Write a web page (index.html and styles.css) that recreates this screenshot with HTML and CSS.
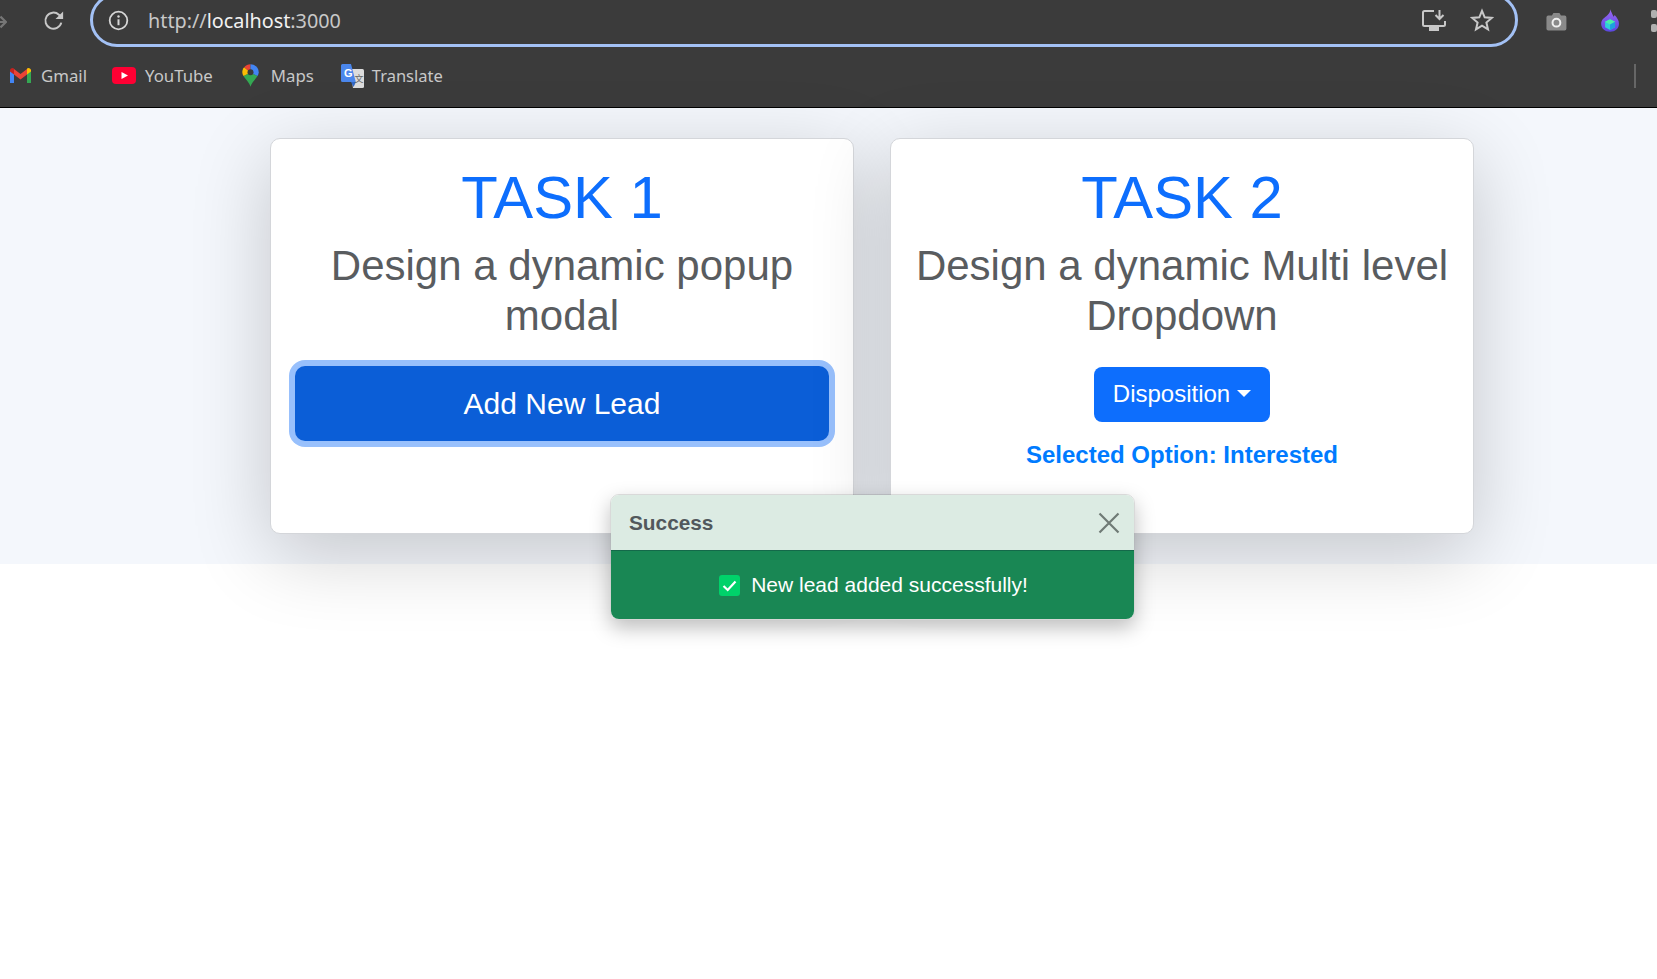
FILE: index.html

```html
<!DOCTYPE html>
<html lang="en">
<head>
  <meta charset="UTF-8" />
  <title>Tasks</title>
  <link rel="stylesheet" href="styles.css">
</head>
<body>
  <div class="browser">
    <div class="toolbar">
      <svg class="forward" width="8" height="18" viewBox="0 0 8 18"><path d="M-3 9H6M.5 3L6.500 9 .5 15" fill="none" stroke="#767676" stroke-width="2.400"/></svg>
      <svg class="reload" width="24" height="24" viewBox="0 0 20 20"><path d="M16.800 11.500A7.400 7.400 0 1 1 14.600 4.200L17 6.400" fill="none" stroke="#c8c8c8" stroke-width="1.800"/><path d="M18.500 1.200V8.200H11.500Z" fill="#c8c8c8"/></svg>
      <div class="omnibox">
        <svg class="info" width="21" height="21" viewBox="0 0 21 21"><circle cx="10.500" cy="10.500" r="8.800" fill="none" stroke="#d6d6d6" stroke-width="1.800"/><path d="M10.500 9.300V15.200" stroke="#d6d6d6" stroke-width="2"/><circle cx="10.500" cy="6.500" r="1.200" fill="#d6d6d6"/></svg>
        <span class="url">http://<b>localhost</b>:3000</span>
        <svg class="install" width="26" height="23" viewBox="0 0 26 23"><path d="M13 2H3.500A1.500 1.500 0 0 0 2 3.500V15.500A1.500 1.500 0 0 0 3.500 17H22.500A1.500 1.500 0 0 0 24 15.500V12" fill="none" stroke="#c8c8c8" stroke-width="2"/><path d="M18.500 1V9.500M14.500 6L18.500 10 22.500 6" fill="none" stroke="#c8c8c8" stroke-width="2"/><path d="M8 18H18V22H8Z" fill="#c8c8c8"/></svg>
        <svg class="star" width="24" height="24" viewBox="0 0 24 24"><path d="M12 2.800L14.700 9.300 21.700 9.900 16.400 14.500 18 21.400 12 17.700 6 21.400 7.600 14.500 2.300 9.900 9.300 9.300Z" fill="none" stroke="#c8c8c8" stroke-width="2"/></svg>
      </div>
      <svg class="camera" width="23" height="21" viewBox="0 0 23 21"><path d="M2.500 4H6.500L8.200 1H14.800L16.500 4H20.500A2 2 0 0 1 22.500 6V18.500A2 2 0 0 1 20.500 20.500H2.500A2 2 0 0 1 .5 18.500V6A2 2 0 0 1 2.500 4Z" fill="#8a8a8a"/><circle cx="11.500" cy="11.800" r="4.300" fill="none" stroke="#f0f0f0" stroke-width="2.200"/></svg>
      <svg class="flame" width="20" height="25" viewBox="0 0 20 25">
        <defs><linearGradient id="flameFill" x1="0" y1="0" x2="0" y2="1"><stop offset="0" stop-color="#9a68f2"/><stop offset="1" stop-color="#5a48e0"/></linearGradient></defs>
        <path d="M10.500 0C10.800 3 13 5.500 13.800 8.500C14.300 7.800 14.800 7.200 15 6.500C17.800 9.500 19.800 12.500 19.800 16C19.800 21.500 15.500 24.800 10 24.800C4.500 24.800 .2 21.500 .2 16C.2 11.500 4 9.500 7 6.800C8.800 5 10.200 2.800 10.500 0Z" fill="url(#flameFill)"/>
        <path d="M10 11L15.500 14V20L10 23 4.500 20V14Z" fill="#2fd0d8"/><path d="M10 11L15.500 14 10 17 4.500 14Z" fill="#4af0a8"/><path d="M10 17L15.500 14V20L10 23Z" fill="#1f9fe0"/>
      </svg>
      <div class="menu-dots"><i></i><i></i></div>
    </div>

    <div class="bookmarks">
      <a class="bookmark">
        <svg width="23" height="17" viewBox="0 0 23 17"><path d="M1 16H5V7L1 3.500Z" fill="#4285f4"/><path d="M18 16H22V3.500L18 7Z" fill="#34a853"/><path d="M5 7.500L11.500 12.500 18 7.500V2L11.500 7 5 2Z" fill="#ea4335"/><path d="M1 4.500V3A2.500 2.500 0 0 1 5 1.500V7.500Z" fill="#c5221f"/><path d="M22 4.500V3A2.500 2.500 0 0 0 18 1.500V7.500Z" fill="#fbbc04"/></svg>
        Gmail
      </a>
      <a class="bookmark">
        <svg width="24" height="17" viewBox="0 0 24 17"><rect width="24" height="17" rx="4" fill="#ff0033"/><path d="M9.500 5L16 8.500 9.500 12Z" fill="#fff"/></svg>
        YouTube
      </a>
      <a class="bookmark bookmark-maps">
        <svg width="17" height="23" viewBox="0 0 17 23"><path d="M8.500 22.800C7.500 18.500 3.500 15.500 1.500 12L8.500 8.500 15.500 12C13.500 15.500 9.500 18.500 8.500 22.800Z" fill="#34a853"/><path d="M1.500 12C.7 10.700.3 9.500.3 8.200C.3 6.300 1 4.600 2.200 3.300L8.500 8.500Z" fill="#fbbc04"/><path d="M2.200 3.300C3.700 1.500 6 .3 8.500 .3L8.500 8.500Z" fill="#ea4335"/><path d="M8.500 .3C13 .3 16.700 3.800 16.700 8.200C16.700 9.500 16.300 10.700 15.500 12L8.500 8.500Z" fill="#4285f4"/><circle cx="8.500" cy="8.300" r="3" fill="#3b3b3b"/></svg>
        Maps
      </a>
      <a class="bookmark bookmark-translate">
        <svg width="23" height="24" viewBox="0 0 23 24"><path d="M9 5H21.500A1.500 1.500 0 0 1 23 6.500V22.500A1.500 1.500 0 0 1 21.500 24H12Z" fill="#dcdcdc"/><path d="M1.500 0H10L14.800 18H1.500A1.500 1.500 0 0 1 0 16.500V1.500A1.500 1.500 0 0 1 1.500 0Z" fill="#4b87ec"/><path d="M10 18L12.500 23 15 18Z" fill="#3268c8"/><text x="3" y="12.500" class="g-letter">G</text><text x="13.500" y="18" class="zh-letter">文</text></svg>
        Translate
      </a>
      <span class="bookmarks-sep"></span>
    </div>
  </div>

  <div class="page">
    <div class="task-row">
      <section class="task-card">
        <h1>TASK 1</h1>
        <h2>Design a dynamic popup modal</h2>
        <button class="btn-lead">Add New Lead</button>
      </section>
      <section class="task-card">
        <h1>TASK 2</h1>
        <h2>Design a dynamic Multi level Dropdown</h2>
        <button class="btn-drop">Disposition<span class="caret"></span></button>
        <p class="selected">Selected Option: Interested</p>
      </section>
    </div>
  </div>

  <div class="toast">
    <div class="toast-head">
      <strong>Success</strong>
      <svg width="22" height="22" viewBox="0 0 22 22"><path d="M1.500 1.500L20.500 20.500M20.500 1.500L1.500 20.500" stroke="#6f7a75" stroke-width="2.200"/></svg>
    </div>
    <div class="toast-body">
      <svg width="21" height="21" viewBox="0 0 21 21"><rect width="21" height="21" rx="3" fill="#00d26a"/><path d="M4.500 11L8.700 15 16.500 6.500" fill="none" stroke="#fff" stroke-width="2.200"/></svg>
      New lead added successfully!
    </div>
  </div>
</body>
</html>
```

FILE: styles.css

```css
body {
  margin: 0;
  min-height: 100vh;
  font-family: "Liberation Sans", Arial, sans-serif;
  background: #fff;
}
.browser {
  background: #3b3b3b;
  height: 107px;
  border-bottom: 1px solid #000;
  overflow: hidden;
  font-family: "Noto Sans", sans-serif;
}
.toolbar {
  display: flex;
  align-items: center;
  height: 47px;
}
.forward { margin-top: -3px; }
.reload { margin: -6px 0 0 36px; }
.omnibox {
  flex: none;
  display: flex;
  align-items: center;
  box-sizing: border-box;
  width: 1428px;
  height: 54px;
  margin: -7px 0 0 25px;
  padding: 0 21px 0 15px;
  border: 3px solid #a3c1f5;
  border-radius: 28px;
}
.url {
  margin-left: 19px;
  font-size: 19.8px;
  color: #c8c8c8;
}
.url b { font-weight: 400; color: #f2f2f2; }
.install { margin-left: auto; }
.star { margin-left: 23px; }
.camera { margin: -4px 0 0 28px; }
.flame { margin: -7px 0 0 34px; }
.menu-dots {
  display: flex;
  flex-direction: column;
  gap: 6px;
  margin: -5px 0 0 32px;
}
.menu-dots i {
  display: block;
  width: 6px;
  height: 8px;
  background: #b0b0b0;
  border-radius: 2px;
}
.bookmarks {
  display: flex;
  align-items: center;
  gap: 8px;
  height: 57px;
  padding: 0 0 3px 9px;
}
.bookmark {
  display: flex;
  align-items: center;
  gap: 9px;
  margin-right: 17px;
  font-size: 16.8px;
  color: #c8c8c8;
}
.bookmark-maps { gap: 12px; margin-left: 4px; }
.bookmark-translate { gap: 8px; margin-left: 2px; font-size: 16.5px; }
.bookmarks-sep {
  width: 2px;
  height: 24px;
  margin-left: auto;
  margin-right: 21px;
  background: #666;
}
.g-letter { font: 700 11px "Liberation Sans", sans-serif; fill: #fff; }
.zh-letter { font: 400 9px "Noto Sans CJK SC", sans-serif; fill: #666; }

.page {
  background: #f4f7fc;
  padding: 30px 0 30px 270px;
  height: 396px;
}
.task-row {
  display: flex;
  gap: 36px;
  height: 100%;
}
.task-card {
  position: relative;
  box-sizing: border-box;
  width: 584px;
  padding: 23px 24px;
  background: #fff;
  border: 1px solid #d4d6da;
  border-radius: 10px;
  box-shadow: 0 20px 80px rgba(0, 0, 0, 0.2);
  text-align: center;
}
.task-card h1 {
  margin: 0 0 7px;
  font-size: 59.8px;
  line-height: 72px;
  font-weight: 400;
  color: #0d6efd;
}
.task-card h2 {
  margin: 0 0 25px;
  font-size: 42px;
  line-height: 50px;
  font-weight: 400;
  color: #595c5f;
}
.btn-lead {
  display: block;
  width: 100%;
  height: 75px;
  background: #0b5ed7;
  border: none;
  border-radius: 10px;
  box-shadow: 0 0 0 6px #98c0fc;
  color: #fff;
  font: 400 30px "Liberation Sans", sans-serif;
}
.btn-drop {
  display: inline-flex;
  align-items: center;
  height: 55px;
  margin-top: 1px;
  padding: 0 19px 2px;
  background: #0d6efd;
  border: none;
  border-radius: 8px;
  color: #fff;
  font: 400 24px "Liberation Sans", sans-serif;
}
.caret {
  margin-left: 7px;
  border-top: 7px solid #fff;
  border-left: 7px solid transparent;
  border-right: 7px solid transparent;
}
.selected {
  margin: 19px 0 0;
  font-size: 24px;
  font-weight: 700;
  color: #007bff;
}

.toast {
  position: absolute;
  top: 494px;
  left: 610px;
  width: 525px;
  box-sizing: border-box;
  border: 1px solid rgba(0, 0, 0, 0.15);
  border-radius: 9px;
  overflow: hidden;
  box-shadow: 0 8px 20px rgba(0, 0, 0, 0.25);
}
.toast-head {
  display: flex;
  align-items: center;
  justify-content: space-between;
  height: 56px;
  padding: 0 14px 0 18px;
  background: #dcebe3;
  border-bottom: 1px solid #14694a;
  box-sizing: border-box;
  color: #52585c;
  font-size: 20.8px;
}
.toast-body {
  display: flex;
  align-items: center;
  justify-content: center;
  gap: 11px;
  height: 68px;
  padding-left: 2px;
  background: #198754;
  color: #fff;
  font-size: 21px;
}
```
